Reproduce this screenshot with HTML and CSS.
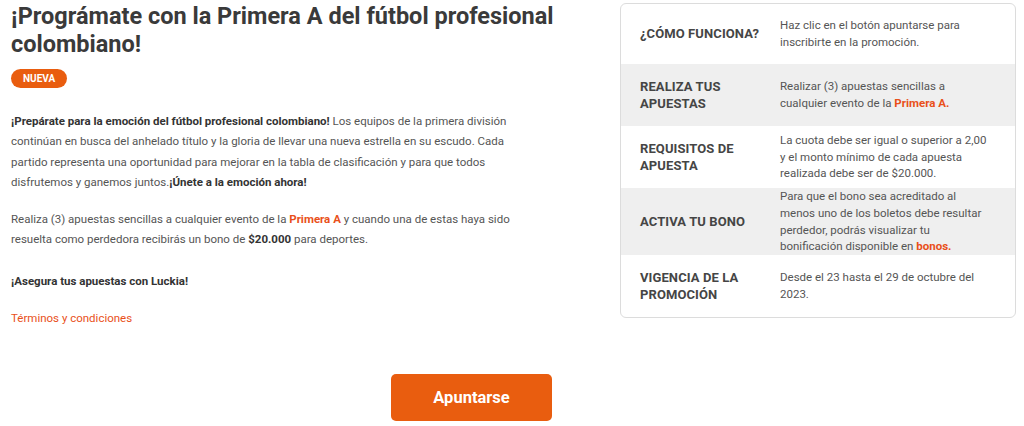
FILE: index.html
```html
<!DOCTYPE html>
<html lang="es">
<head>
<meta charset="utf-8">
<link rel="stylesheet" href="styles.css">
</head>
<body>
<div class="page">
  <div class="top">
    <section class="info">
      <h1 class="title">¡Prográmate con la Primera A del fútbol profesional colombiano!</h1>
      <span class="badge">NUEVA</span>
      <p class="text first"><strong>¡Prepárate para la emoción del fútbol profesional colombiano!</strong> Los equipos de la primera división continúan en busca del anhelado título y la gloria de llevar una nueva estrella en su escudo. Cada partido representa una oportunidad para mejorar en la tabla de clasificación y para que todos disfrutemos y ganemos juntos.<strong>¡Únete a la emoción ahora!</strong></p>
      <p class="text second">Realiza (3) apuestas sencillas a cualquier evento de la <strong class="hl">Primera A</strong> y cuando una de estas haya sido resuelta como perdedora recibirás un bono de <strong>$20.000</strong> para deportes.</p>
      <p class="text third"><strong>¡Asegura tus apuestas con Luckia!</strong></p>
      <p class="text fourth"><a class="link" href="#">Términos y condiciones</a></p>
    </section>
    <aside class="card">
      <div class="row">
        <div class="label">¿CÓMO FUNCIONA?</div>
        <div class="value">Haz clic en el botón apuntarse para<br>inscribirte en la promoción.</div>
      </div>
      <div class="row alt">
        <div class="label">REALIZA TUS APUESTAS</div>
        <div class="value">Realizar (3) apuestas sencillas a<br>cualquier evento de la <strong class="hl">Primera A.</strong></div>
      </div>
      <div class="row">
        <div class="label">REQUISITOS DE APUESTA</div>
        <div class="value">La cuota debe ser igual o superior a 2,00<br>y el monto mínimo de cada apuesta<br>realizada debe ser de $20.000.</div>
      </div>
      <div class="row alt tight">
        <div class="label">ACTIVA TU BONO</div>
        <div class="value">Para que el bono sea acreditado al<br>menos uno de los boletos debe resultar<br>perdedor, podrás visualizar tu<br>bonificación disponible en <strong class="hl">bonos.</strong></div>
      </div>
      <div class="row">
        <div class="label">VIGENCIA DE LA PROMOCIÓN</div>
        <div class="value">Desde el 23 hasta el 29 de octubre del<br>2023.</div>
      </div>
    </aside>
  </div>
  <div class="actions">
    <button class="btn">Apuntarse</button>
  </div>
</div>
</body>
</html>
```

FILE: styles.css
```css
* { box-sizing: border-box; }
html, body { margin: 0; padding: 0; background: #fff; }
body {
  font-family: Roboto, "Liberation Sans", Arial, sans-serif;
  color: #555;
}
.page { padding: 0 8px 0 11px; }
.top {
  display: flex;
  align-items: flex-start;
  gap: 50px;
}
.info { width: 559px; flex: none; }
.title {
  margin: 2px 0 0;
  font-size: 23.5px;
  line-height: 28px;
  font-weight: 700;
  color: #3a3a3a;
}
.badge {
  display: inline-block;
  margin-top: 11px;
  height: 19px;
  padding: 0 12px;
  border-radius: 10px;
  background: #e95d0f;
  color: #fff;
  font-size: 10px;
  font-weight: 700;
  line-height: 19px;
}
.text {
  max-width: 515px;
  margin: 18px 0 0;
  font-size: 11.5px;
  line-height: 20.4px;
  color: #555;
}
.text.first { margin-top: 23px; }
.text.second { margin-top: 16px; }
.text.third { margin-top: 22px; }
.text.fourth { margin-top: 16px; }
.text strong { color: #333; font-weight: 700; }
.text strong.hl, .hl { color: #e9501a; font-weight: 700; }
.link { color: #e9501a; text-decoration: none; }
.card {
  margin-top: 3px;
  width: 396px;
  flex: none;
  border: 1px solid #dcdcdc;
  border-radius: 6px;
  overflow: hidden;
  background: #fff;
}
.row {
  display: flex;
  align-items: center;
  min-height: 62px;
  padding: 0 6px 0 19px;
}
.row:first-child { min-height: 60px; }
.row.alt { background: #efefef; }
.row.tight { min-height: 67px; }
.label {
  width: 140px;
  flex: none;
  font-size: 13px;
  font-weight: 700;
  line-height: 17.5px;
  color: #454545;
  letter-spacing: 0.1px;
}
.value {
  flex: 1;
  font-size: 11.5px;
  line-height: 16.8px;
  color: #555;
}
.actions {
  padding-left: 380px;
  margin-top: 46px;
}
.btn {
  width: 161px;
  height: 47px;
  border: 0;
  border-radius: 5px;
  background: #e95d0f;
  color: #fff;
  font-family: Roboto, "Liberation Sans", Arial, sans-serif;
  font-size: 16.5px;
  font-weight: 700;
  cursor: pointer;
}
```
